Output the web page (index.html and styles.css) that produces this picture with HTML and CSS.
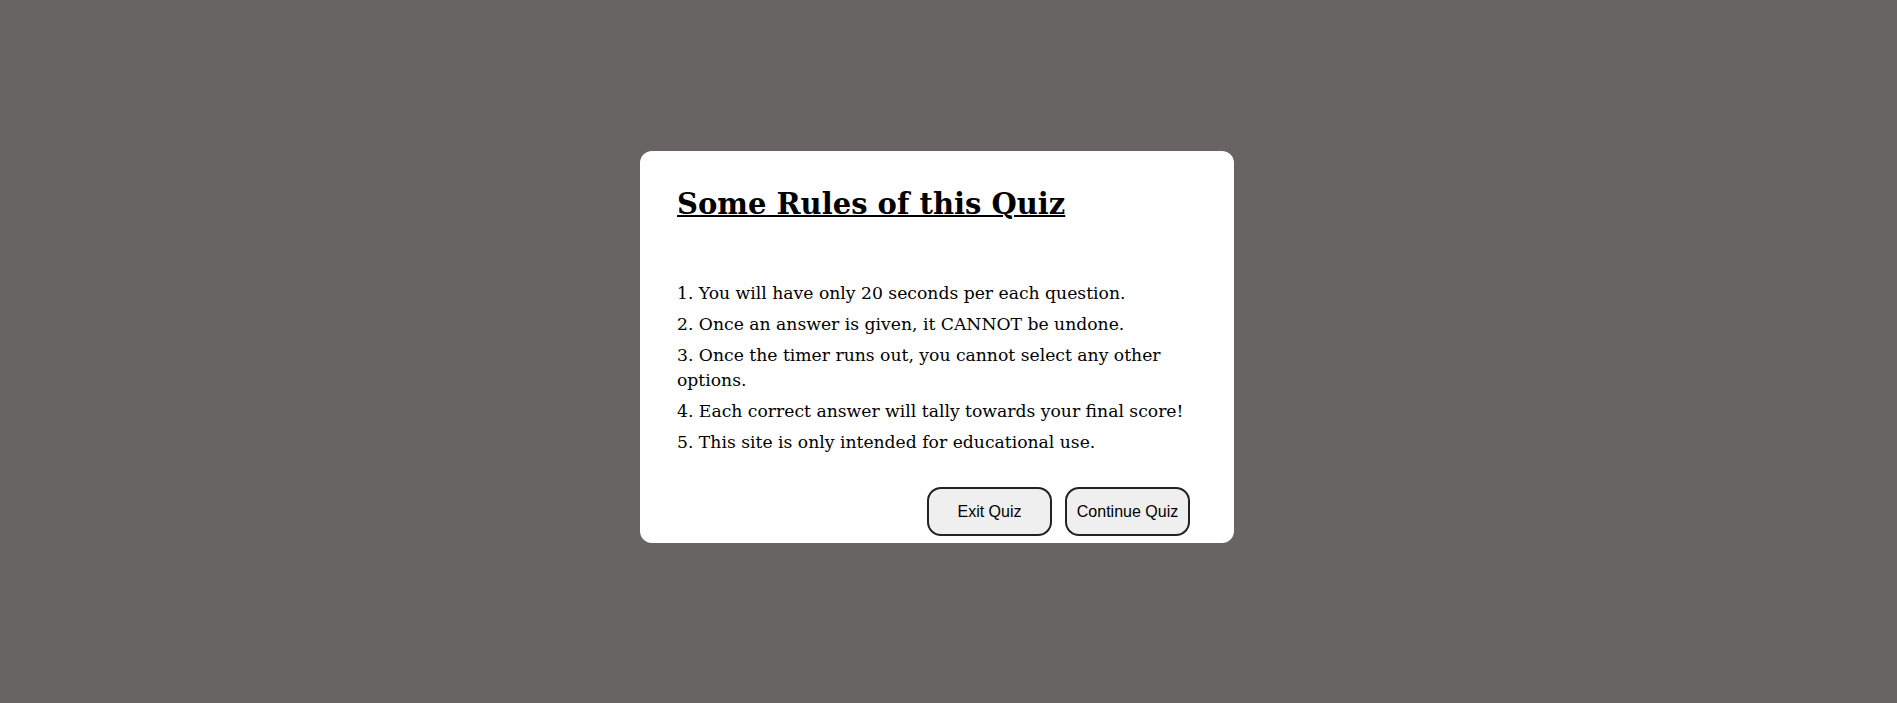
FILE: index.html
```html
<!DOCTYPE html>
<html lang="en">
<head>
<meta charset="utf-8">
<title>Quiz Rules</title>
<link rel="stylesheet" href="styles.css">
</head>
<body>
<div class="stage">
  <div class="card">
    <h1 class="title">Some Rules of this Quiz</h1>
    <ul class="rules">
      <li>1. You will have only 20 seconds per each question.</li>
      <li>2. Once an answer is given, it CANNOT be undone.</li>
      <li>3. Once the timer runs out, you cannot select any other options.</li>
      <li>4. Each correct answer will tally towards your final score!</li>
      <li>5. This site is only intended for educational use.</li>
    </ul>
    <div class="actions">
      <button class="btn">Exit Quiz</button>
      <button class="btn">Continue Quiz</button>
    </div>
  </div>
</div>
</body>
</html>
```
FILE: styles.css
```css
html, body {
  margin: 0;
  padding: 0;
}
body {
  background: #686463;
  width: 1897px;
  height: 703px;
  overflow: hidden;
}
.stage {
  padding: 151px 0 0 640px;
}
.card {
  box-sizing: border-box;
  width: 594px;
  height: 392px;
  background: #ffffff;
  border-radius: 12px;
  padding: 36px 44px 7px 37px;
  display: flex;
  flex-direction: column;
  font-family: "DejaVu Serif", "Liberation Serif", serif;
  color: #000;
}
.title {
  margin: 0;
  font-size: 29px;
  line-height: 34px;
  font-weight: bold;
  text-decoration: underline;
  text-decoration-thickness: 2px;
}
.rules {
  list-style: none;
  margin: 60px 0 0 0;
  padding: 0;
  font-size: 17.2px;
  line-height: 25px;
}
.rules li {
  margin: 0 0 6px 0;
}
.rules li:last-child {
  margin-bottom: 0;
}
.actions {
  margin-top: auto;
  display: flex;
  justify-content: flex-end;
  gap: 13px;
}
.btn {
  box-sizing: border-box;
  width: 125px;
  height: 49px;
  border: 2px solid #222;
  border-radius: 14px;
  background: #efefef;
  font-family: "Liberation Sans", Arial, sans-serif;
  font-size: 16px;
  color: #000;
  padding: 0;
}
```
